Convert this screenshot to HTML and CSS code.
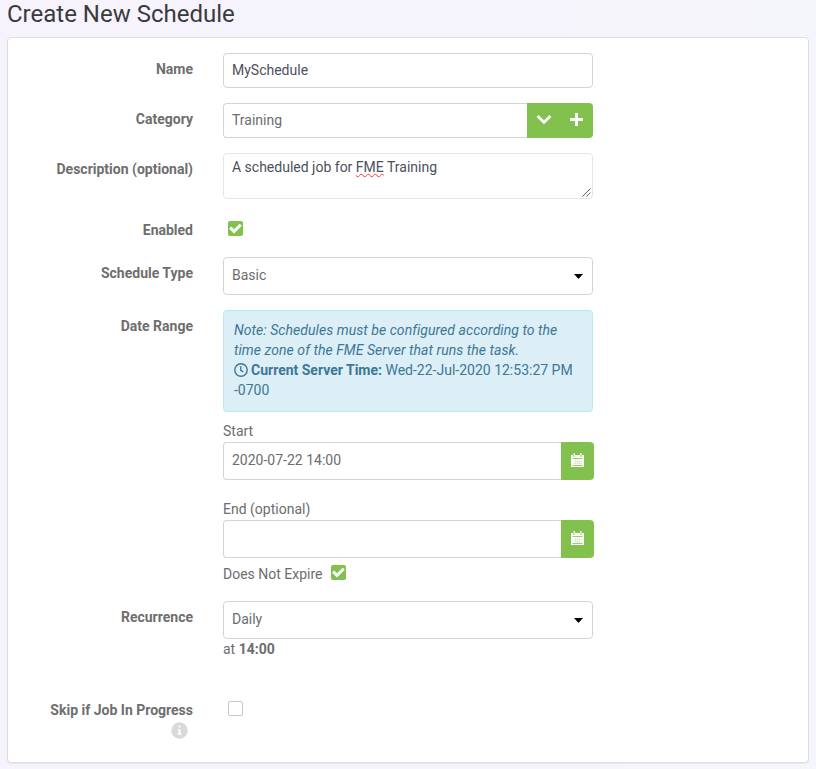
FILE: index.html
```html
<!DOCTYPE html>
<html lang="en">
<head>
<meta charset="utf-8">
<title>Create New Schedule</title>
<link rel="stylesheet" href="styles.css">
</head>
<body>
<svg width="0" height="0" class="defs">
  <symbol id="check" viewBox="0 0 15 15"><path d="M1.1 7.700 3.200 5.600 6 8.300 11.700 2.700 13.800 4.800 6 12.400Z" fill="#fff"/></symbol>
  <symbol id="calendar" viewBox="0 0 13 14"><path d="M0 2h2v1.500h2V2h5v1.500h2V2h2v12H0Z" fill="#fff"/><path d="M2.500 0h1.300v2.800H2.500ZM9.200 0h1.300v2.800H9.200Z" fill="#fff"/><path d="M1.500 5.500h10M1.500 12.500h10" stroke="#82c14d" stroke-width=".8"/><path d="M2 8.500h9M2 10.500h9M4.500 6v6M6.500 6v6M8.500 6v6" stroke="#82c14d" stroke-width=".2"/></symbol>
</svg>
<h1>Create New Schedule</h1>
<form class="card">
  <div class="row name">
    <label class="label">Name</label>
    <div class="field"><input class="control dark" value="MySchedule"></div>
  </div>
  <div class="row category">
    <label class="label">Category</label>
    <div class="field group">
      <input class="control" value="Training">
      <span class="buttons">
        <svg width="16" height="11" viewBox="0 0 16 11"><path d="M1.500 2 8 8.300 14.500 2" fill="none" stroke="#fff" stroke-width="2.800"/></svg>
        <svg width="13" height="13" viewBox="0 0 13 13"><path d="M6.500 0v13M0 6.500h13" stroke="#fff" stroke-width="3"/></svg>
      </span>
    </div>
  </div>
  <div class="row description">
    <label class="label">Description (optional)</label>
    <div class="field"><div class="area dark">A scheduled job for <span class="misspelled">FME</span> Training
      <svg class="grip" width="9" height="9" viewBox="0 0 9 9"><path d="M.5 8.500 8.500.5M4.500 8.500 8.500 4.500" stroke="#555" stroke-width=".9"/></svg></div></div>
  </div>
  <div class="row enabled">
    <label class="label">Enabled</label>
    <div class="field"><span class="box checked"><svg width="15" height="15"><use href="#check"/></svg></span></div>
  </div>
  <div class="row type">
    <label class="label">Schedule Type</label>
    <div class="field"><div class="control select">Basic<svg width="9" height="5" viewBox="0 0 9 5"><path d="M0 0h9L4.500 5Z"/></svg></div></div>
  </div>
  <div class="row range">
    <label class="label">Date Range</label>
    <div class="field">
      <div class="note"><em>Note: Schedules must be configured according to the time zone of the FME Server that runs the task.</em><br><svg class="clock" width="14" height="14" viewBox="0 0 14 14"><circle cx="7" cy="7" r="6.200"/><path d="M6.800 3.300V7.300L9.300 8.900"/></svg><b>Current Server Time:</b> Wed-22-Jul-2020 12:53:27 PM<br>-0700</div>
      <div class="caption">Start</div>
      <div class="group date">
        <input class="control" value="2020-07-22 14:00">
        <span class="buttons"><svg width="13" height="14"><use href="#calendar"/></svg></span>
      </div>
      <div class="caption">End (optional)</div>
      <div class="group date last">
        <input class="control" value="">
        <span class="buttons"><svg width="13" height="14"><use href="#calendar"/></svg></span>
      </div>
      <div class="expire">Does Not Expire <span class="box checked"><svg width="15" height="15"><use href="#check"/></svg></span></div>
    </div>
  </div>
  <div class="row recurrence">
    <label class="label">Recurrence</label>
    <div class="field"><div class="control select">Daily<svg width="9" height="5" viewBox="0 0 9 5"><path d="M0 0h9L4.500 5Z"/></svg></div>
      <div class="at">at <b>14:00</b></div></div>
  </div>
  <div class="row skip">
    <label class="label">Skip if Job In Progress<svg class="info" width="17" height="17" viewBox="0 0 17 17"><circle cx="8.500" cy="8.500" r="8.200" fill="#d9d9d9"/><path d="M7.500 3.700h2v1.900h-2ZM6.600 7.200h2.900v4.400h1V12.800H6.500v-1.200h1.100v-3.200H6.600Z" fill="#fff"/></svg></label>
    <div class="field"><span class="box"></span></div>
  </div>
</form>
</body>
</html>
```

FILE: styles.css
```css
* { box-sizing: border-box; }
body {
  margin: 0;
  padding: 0 7px;
  height: 769px;
  overflow: hidden;
  background: linear-gradient(90deg, #f6f3fd 0, #f5f3fc 50%, #f5f6fb 100%);
  font: 14px/20px Roboto, sans-serif;
  color: #6b6d6f;
}
.defs { position: absolute; }
h1 {
  margin: 0;
  height: 37px;
  font-size: 24px;
  font-weight: 400;
  line-height: 28px;
  color: #3a3a3e;
}
.card {
  width: 802px;
  height: 726px;
  padding-top: 15px;
  background: #fff;
  border: 1px solid #dddde2;
  border-radius: 4px;
  box-shadow: 0 1px 1px rgba(0, 0, 0, .05);
}
.row { display: grid; grid-template-columns: 185px 371px; column-gap: 30px; }
.name, .category { height: 50px; }
.description { height: 62px; }
.enabled { height: 42px; }
.type { height: 53px; }
.range { height: 291px; }
.recurrence { height: 96px; }
.label { padding-top: 6px; text-align: right; font-weight: 700; color: #6e6e6e; }
.control {
  display: block;
  width: 370px;
  height: 35px;
  padding: 0 8px 2px;
  border: 1px solid #d3d5d5;
  border-radius: 4px;
  background: #fff;
  font: inherit;
  color: #6b6d6f;
  outline: 0;
}
.control.dark, .area.dark { color: #4c505b; }
.group { display: flex; }
.group .control { flex: 1; width: auto; min-width: 0; border-right: 0; border-radius: 4px 0 0 4px; }
.category .group { width: 370px; }
.buttons {
  display: flex;
  align-items: center;
  justify-content: center;
  gap: 18px;
  width: 66px;
  height: 35px;
  padding: 0 2px 2px 0;
  background: #82c14d;
  border-radius: 0 4px 4px 0;
}
.area {
  position: relative;
  width: 370px;
  height: 46px;
  padding: 3px 8px;
  border: 1px solid #dfe7e9;
  border-radius: 4px;
}
.misspelled { text-decoration: underline wavy #f33 1px; text-underline-offset: 1px; text-decoration-skip-ink: none; }
.grip { position: absolute; right: 1px; bottom: 1px; }
.box {
  display: block;
  width: 15px;
  height: 15px;
  border: 1px solid #c8c8c8;
  border-radius: 2px;
}
.checked { border: 0; background: #82c14d; }
.checked svg { display: block; }
.field > .box { margin-left: 5px; }
.enabled .field { padding-top: 6px; }
.enabled .label { padding-top: 5px; }
.select { display: flex; align-items: center; justify-content: space-between; height: 38px; padding: 0 9px 2px 8px; }
.select svg { margin-top: 3px; }
.note {
  width: 370px;
  height: 102px;
  padding: 9px 10px;
  background: #dceef6;
  border: 1px solid #bce8f1;
  border-radius: 4px;
  color: #3d7796;
}
.note em { letter-spacing: .055px; }
.clock { margin-right: 3px; vertical-align: -2px; fill: none; stroke: #3d7796; stroke-width: 1.4; }
.caption { height: 30px; padding-top: 9px; }
.date { height: 38px; margin-bottom: 10px; }
.date .control, .date .buttons { height: 38px; }
.date .buttons { width: 33px; padding-right: 0; }
.last { margin-bottom: 0; }
.expire { display: flex; gap: 8px; padding-top: 6px; }
.expire .box { margin-top: 1px; }
.skip .label { padding-top: 3px; }
.skip .field { padding-top: 4px; }
.info { display: block; margin: 2px 5px 0 auto; }
```
